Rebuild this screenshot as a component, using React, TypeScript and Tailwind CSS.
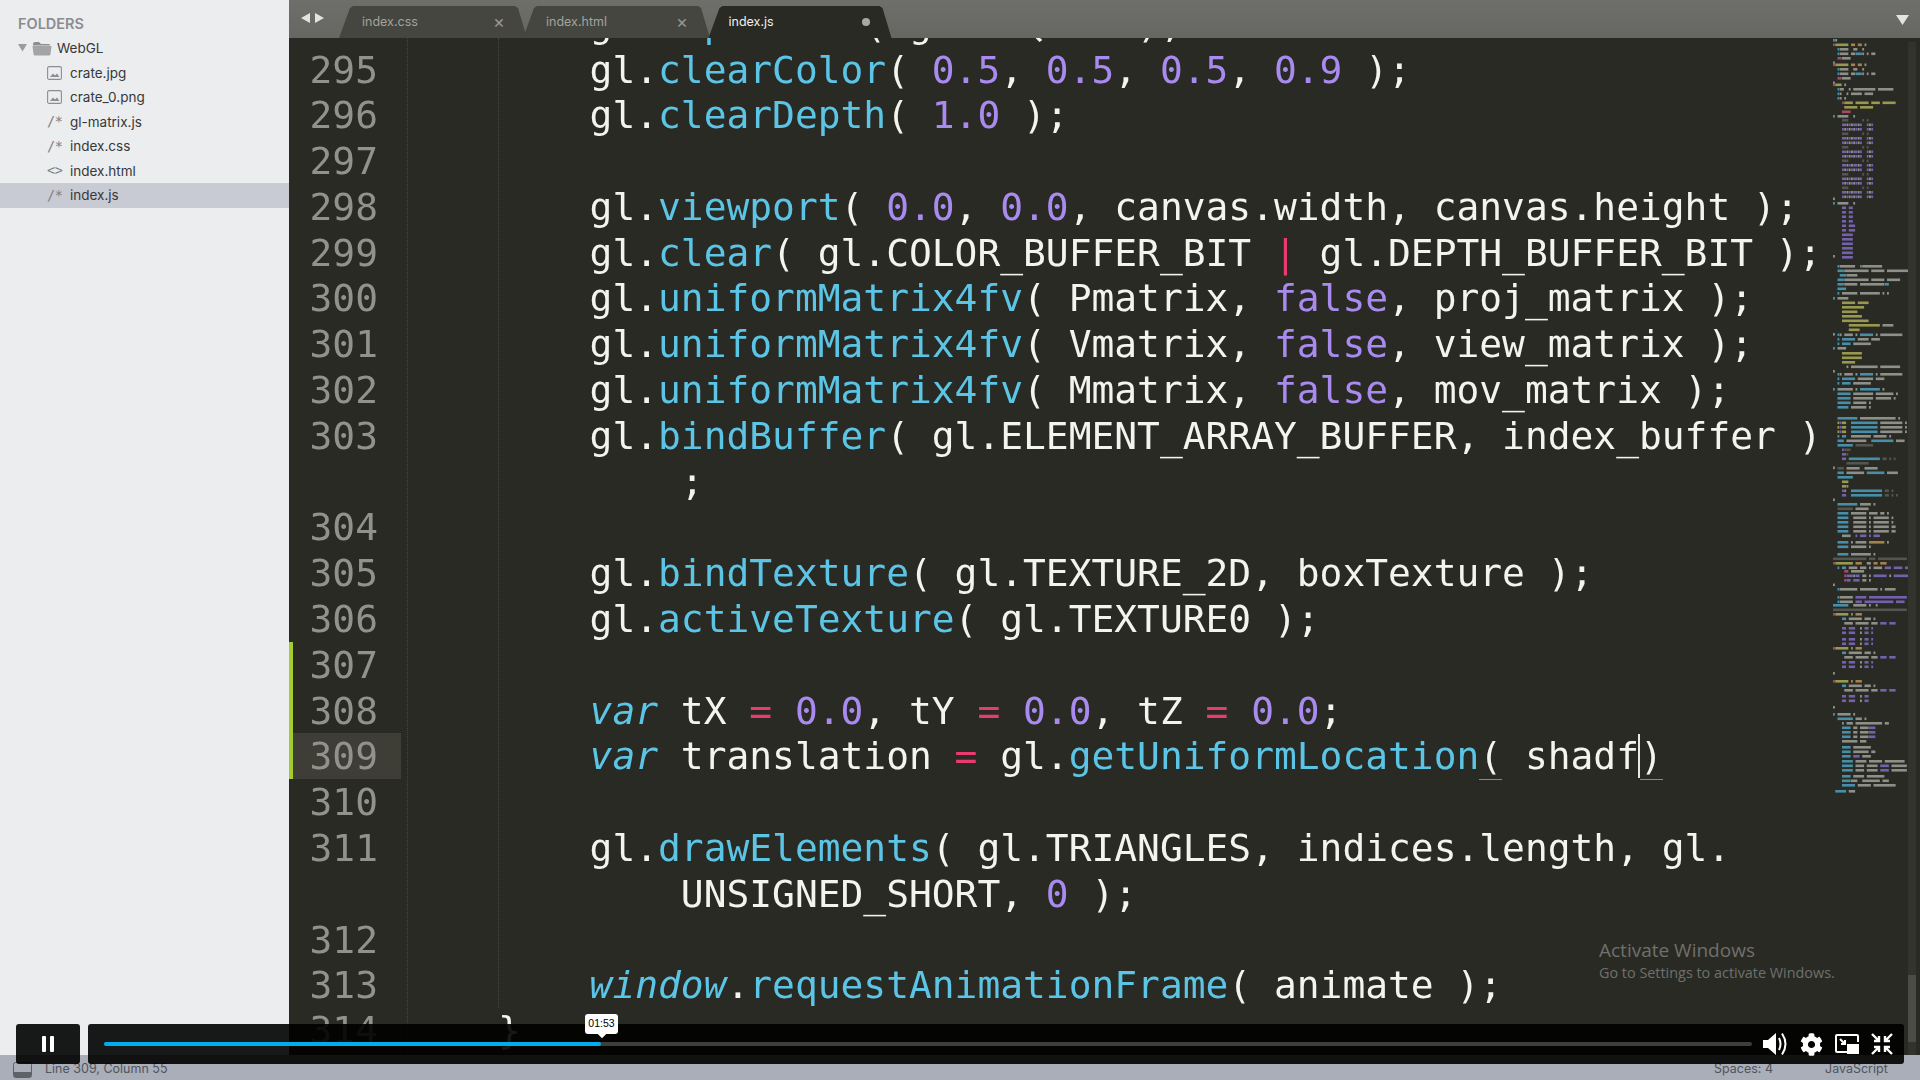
import React from "react";
import { FaCog } from "react-icons/fa";

const W = "text-[#f4f4ef]", C = "text-[#5cc5e6]", P = "text-[#a98bf0]", R = "text-[#ea3b70]";

function Tok({ t, c, i }: { t: string; c?: string; i?: boolean }) {
  return <span className={(c ?? W) + (i ? " italic" : "")}>{t}</span>;
}

const G = ({ t }: { t: string }) => <Tok t={t} />;
const F = ({ t }: { t: string }) => <Tok t={t} c={C} />;
const N = ({ t }: { t: string }) => <Tok t={t} c={P} />;
const O = ({ t }: { t: string }) => <Tok t={t} c={R} />;

function Row({ n, active, changed, children }: { n?: string; active?: boolean; changed?: boolean; children?: React.ReactNode }) {
  return (
    <div className="flex h-[45.8px] leading-[47px] whitespace-pre">
      <div className={"w-[4px] shrink-0 " + (changed ? "bg-[#a3cc2e]" : "")} />
      <div className={"w-[108px] shrink-0 pr-[23px] text-right text-[#92928c] " + (active ? "bg-[#3e3e36]" : "")}>{n}</div>
      <div className="w-[6px] shrink-0" />
      <div className="pl-[182.6px]">{children}</div>
    </div>
  );
}

const tree = [
  { n: "crate.jpg", k: "img" },
  { n: "crate_0.png", k: "img" },
  { n: "gl-matrix.js", k: "js" },
  { n: "index.css", k: "js" },
  { n: "index.html", k: "html" },
  { n: "index.js", k: "js", sel: true },
];

function FileIcon({ k }: { k: string }) {
  if (k === "img")
    return (
      <svg width="15" height="14" viewBox="0 0 15 14" className="text-[#8c8e92]">
        <rect x="0.6" y="0.6" width="13.8" height="12.8" rx="1.5" fill="none" stroke="currentColor" strokeWidth="1.1" />
        <path d="M3 11 L6 7.5 L8 9.5 L10 7.5 L12.5 11 Z" fill="currentColor" />
      </svg>
    );
  return (
    <span className="w-[16px] text-left text-[13.5px] leading-none tracking-[-0.5px] text-[#7d7f83] font-['DejaVu_Sans_Mono',monospace]">
      {k === "html" ? "<>" : "/*"}
    </span>
  );
}

const fnA = ["ryyyyyy oo oo w", "  cwwww  ww  w", "  cwwww wwcccw w ww", "  rrwwww", "w"];
const fnB = ["ryyyyyy o ooo", "    cc wwwwww www w", "     wwww wwwwww www ppp ppp"];
const cl = ["    ggg      g g", "    ppwpwppwp  pwp", "    pwpwpwpwp  pwp"];
const c2 = (s: string) => [s, s];
const sections: [number, string[]][] = [
  [39, ["cw", ...fnA]],
  [63.5, fnA],
  [83.5, ["ryyy w", "  cww  w wwwwwwwwww wwwwwww", "  cw  w wwwww wwww", "  cw w", "    ryyyy yyyyyy yyyy yyyyyy", "     yyyyyy yyyyyy", "    rrrr"]],
  [115, ["c wwwww  w"]],
  [119, [...cl, ...cl, ...cl, ...cl, ...cl, ...cl]],
  [197.5, ["w"]],
  [202, ["c wwwww  w", ...c2("    pp pp"), ...c2("    pp pp"), ...c2("    pp ppp"), ...c2("    ppppp"), ...c2("    ppppp"), ...c2("    ppppp")]],
  [255, ["w"]],
  [265, ["  cwwwwwww  cwwwwwwwww", "  cccwwwwwwwwwww wwwwww wwwwwwwwwww", "   cccwwwww", "  cccwwwwwwwwwww wwwwww wwwwww", "  cccwwwwww wwwwwwwwwwwcc", "  cccc", "  c wwwwwww wwwwwwwww w w"]],
  [297, ["c wwwww", "    yyyyyy yyyyy", "    yyyyyyyyyy", "    yyyyyyy", "    yyyyyyyyy", "    yyyyyyyyyyyy", "       yyyyyyyyyyyyyy wwwww", "       yyyyy", "w"]],
  [333.5, ["  cw wwww w cccccc w wwwwwwwwww", "  c cccccc wwwww wwww", "  c cccc wwwwwwww", "c wwww"]],
  [352, ["    yyyyyyyyy", "    yyyyyyyyy", "    yyyyyy", "      w wwwwwwwwwwww wwwwwwwww", "w"]],
  [373, ["  cw wwww w cccccc w wwwwwwwwww", "  c cccccc wwwwwww wwww", "  c cccc wwwwwwww"]],
  [388, ["c wwwwwww w ccccccccc w", "  cccccc wwwwwwwww wwwwwwww w", "  cccccc wwwwwwwww wwwwwww w", "  cccccc wwwwww w", "  ccccc wwwwwww w"]],
  [417, ["  ccccccccc wwwwwwwwwwwwwwww w", "  ypyy  cccccccccccc wwwwwwwwww w", "  ypyy  cccccccccccc wwwwwwwwww w", "  ypyy  cccccccccccc wwwwwwwwww w"]],
  [435, ["  c cc  wwwwwwwww wwwwww w", "  ccc wwwwwwwww  cccccccccc wwww", "  ccccccc gggggggg", "    pggg", "    ppg", "    pp cccccccccccccc gg g g", "      gggggggggg", "w"]],
  [467, ["  ggg wwwwww  wwwwww", "  ccc wwwwwwww cccccccc wwwww", "  ccccccc", "    yyy", "    yyw", "    pw  cccccccccccccc gg g", "    pp  cccccccccccccc gg g g", "w"]],
  [503, ["  ccccccccc wwwww w", "  ggggggg wwwwww", "  ccccc wwwwwww wwww ww w", "  ccccc  wwwwww w wwwwwww w", "  ccccc  wwwwww w wwwwwww w", "  ccccc  wwwwww w wwwwwww ww", "  ccccc  wwwwww w wwwwwww ww", "    wwww  p ppp p ppp"]],
  [541, ["  ccccc w wwwww ooooooo w", "  ccccc wwwwwww w"]],
  [553, ["  ccccc wwwwwwwww w", "ggggggggggggggg ggg ggggggggggggg", "ryyyyyyyy ooo  ww oo ooo", "  c cc wwww www w wwww ppp pppp ppp"]],
  [570, ["     rr wwwwww", "     rpppwpp ww w pppppp w pppppppp", "     rpp ppp ww w", "w"]],
  [588, ["  cwwwwwwww wwwwwwww w wwwww"]],
  [596, ["  cwwwwww ppppp ppppppppppppppppp", "  cwwwwww ppp ppppppppppppp pppp"]],
  [604, ["ccccccc  wwwwww w  w"]],
  [608.5, ["ggggggggggggggggggggggggggggggggg"]],
  [613, fnB],
  [627, ["    pp ppp  w pp p", "    pp ppp  w pp p"]],
  [638, ["    pp ppp  w pp p", "    pp ppp  w pp p"]],
  [647, fnB],
  [661, ["    pp ppp  w pp p", "    pp ppp  w pp p"]],
  [672, ["w"]],
  [680, fnB],
  [695, ["    pp ppp  w pp", "    pp ppp  w pp"]],
  [706, ["w"]],
  [713, ["c wwwwww w", "  ccccccc www w", "    w www wwwwwwwwwwww ww", "    cccc ww wwwwppp", "    cccc ww wwwwppp", "    cccc ww wwwwppp", "    wwwwwww www"]],
  [746, ["    cccc wwwwwwww", "    cccc wwwwwww ww", "    cccc ppp wwww"]],
  [760, ["    ccccc wwwww wwwwww wwwwwwwww", "    ccccc wwww wwwww pppp wwwwwww", "    ccccc wwww wwwww pppp wwwwwww"]],
  [775, ["    cccc wwwww wwwwwwww", "    ccccwww  wwwwwwww www", "    cccccc wwwwww wwwwwwwwww"]],
  [790, [" ccccc www"]],
];
const colors: Record<string, string> = { w: "#8f8f89", c: "#478fa8", p: "#7361ad", y: "#98984f", o: "#a3824d", r: "#a84966", g: "#55554f" };

function Minimap() {
  const rects: React.ReactNode[] = [];
  sections.forEach(([y0, rows]) => {
    rows.forEach((s, i) => {
      let x = 0;
      while (x < s.length) {
        let e = x;
        while (e < s.length && s[e] === s[x]) e++;
        if (s[x] !== " ")
          rects.push(<rect key={`${y0}-${i}-${x}`} x={x * 2.25} y={y0 - 38 + i * 4.5} width={(e - x) * 2.25 - 0.4} height={2.6} fill={colors[s[x]]} />);
        x = e;
      }
    });
  });
  return (
    <svg width="75" height="762" viewBox="0 0 75 762" className="blur-[0.5px]">
      {rects}
    </svg>
  );
}

const tabShape = "[clip-path:polygon(0_100%,11px_6%,14px_0,calc(100%-12px)_0,calc(100%-9px)_6%,100%_100%)]";

export default function App() {
  return (
    <div className="flex h-[1080px] w-[1920px] flex-col overflow-hidden bg-[#2a2a25] font-['Inter',sans-serif]">
      <div className="relative flex min-h-0 flex-1">
        <aside className="w-[289px] shrink-0 bg-[#ebedef] pt-[15px]">
          <div className="pl-[18px] text-[14.5px] font-semibold leading-[18px] text-[#8b8c8e]">FOLDERS</div>
          <div className="mt-[3px] flex h-[24.5px] items-center pl-[18px] text-[13.5px] text-[#36383b]">
            <svg width="10" height="8" viewBox="0 0 10 8" className="text-[#9a9b9d]"><path d="M0 0 H9 L4.5 7.5 Z" fill="currentColor" /></svg>
            <svg width="20" height="15" viewBox="0 0 20 15" className="ml-[4px]"><path d="M1 3 Q1 1 3 1 H7 L9 3 H17 Q18 3 18 4.5 H1 Z" fill="#8d8e90" /><path d="M0.5 5 H19.5 L18.5 13 Q18.3 14.5 17 14.5 H3 Q1.7 14.5 1.5 13 Z" fill="#a3a4a6" /></svg>
            <span className="ml-[5px]">WebGL</span>
          </div>
          {tree.map((f) => (
            <div key={f.n} className={"flex h-[24.5px] items-center pl-[47px] text-[13.5px] text-[#36383b] " + (f.sel ? "bg-[#c8cbd3]" : "")}>
              <span className="flex w-[23px] items-center"><FileIcon k={f.k} /></span>
              {f.n}
            </div>
          ))}
        </aside>

        <main className="flex min-w-0 flex-1 flex-col">
          <div className="flex h-[38px] shrink-0 items-end bg-gradient-to-b from-[#6e6f6a] to-[#666762] pr-[6px]">
            <div className="flex h-full w-[47px] shrink-0 items-center gap-[5px] pl-[12px] pb-[2px]">
              <svg width="9" height="10" viewBox="0 0 9 10"><path d="M9 0 V10 L0 5 Z" fill="#e3e3e0" /></svg>
              <svg width="9" height="10" viewBox="0 0 9 10"><path d="M0 0 V10 L9 5 Z" fill="#e3e3e0" /></svg>
            </div>
            <div className={"ml-[3px] flex h-[32px] w-[188px] shrink-0 items-center justify-between bg-[#454640] pl-[23px] pr-[22px] text-[12.5px] text-[#a3a39e] " + tabShape}>
              <span>index.css</span><span className="text-[18px] leading-none text-[#96968f]">×</span>
            </div>
            <div className={"ml-[-4px] flex h-[32px] w-[187px] shrink-0 items-center justify-between bg-[#454640] pl-[23px] pr-[22px] text-[12.5px] text-[#a3a39e] " + tabShape}>
              <span>index.html</span><span className="text-[18px] leading-none text-[#96968f]">×</span>
            </div>
            <div className={"ml-[-1.5px] flex h-[32px] w-[183px] shrink-0 items-center justify-between bg-[#2a2a25] pl-[20px] pr-[22px] text-[12.5px] text-[#f0f0ec] " + tabShape}>
              <span>index.js</span><span className="h-[8px] w-[8px] rounded-full bg-[#a8a8a4]" />
            </div>
            <div className="flex-1" />
            <svg width="13" height="10" viewBox="0 0 13 10" className="mb-[13px] mr-[5px]"><path d="M0 0 H13 L6.5 10 Z" fill="#e3e3e0" /></svg>
          </div>

          <div className="relative flex min-h-0 flex-1">
            <div className="relative min-w-0 flex-1 overflow-hidden font-['DejaVu_Sans_Mono',monospace] text-[37.9px]">
              <div className="pointer-events-none absolute inset-y-0 left-[118px] border-l border-dotted border-[#45463f]" />
              <div className="pointer-events-none absolute bottom-[47px] top-0 left-[209px] border-l border-dotted border-[#45463f]" />
              <div className="mt-[-37.3px] blur-[0.2px]">
                <Row n="294"><G t="gl." /><F t="depthFunc" /><G t="( gl.LEQUAL );" /></Row>
                <Row n="295"><G t="gl." /><F t="clearColor" /><G t="( " /><N t="0.5" /><G t=", " /><N t="0.5" /><G t=", " /><N t="0.5" /><G t=", " /><N t="0.9" /><G t=" );" /></Row>
                <Row n="296"><G t="gl." /><F t="clearDepth" /><G t="( " /><N t="1.0" /><G t=" );" /></Row>
                <Row n="297" />
                <Row n="298"><G t="gl." /><F t="viewport" /><G t="( " /><N t="0.0" /><G t=", " /><N t="0.0" /><G t=", canvas.width, canvas.height );" /></Row>
                <Row n="299"><G t="gl." /><F t="clear" /><G t="( gl.COLOR_BUFFER_BIT " /><O t="|" /><G t=" gl.DEPTH_BUFFER_BIT );" /></Row>
                <Row n="300"><G t="gl." /><F t="uniformMatrix4fv" /><G t="( Pmatrix, " /><N t="false" /><G t=", proj_matrix );" /></Row>
                <Row n="301"><G t="gl." /><F t="uniformMatrix4fv" /><G t="( Vmatrix, " /><N t="false" /><G t=", view_matrix );" /></Row>
                <Row n="302"><G t="gl." /><F t="uniformMatrix4fv" /><G t="( Mmatrix, " /><N t="false" /><G t=", mov_matrix );" /></Row>
                <Row n="303"><G t="gl." /><F t="bindBuffer" /><G t="( gl.ELEMENT_ARRAY_BUFFER, index_buffer )" /></Row>
                <Row><G t="    ;" /></Row>
                <Row n="304" />
                <Row n="305"><G t="gl." /><F t="bindTexture" /><G t="( gl.TEXTURE_2D, boxTexture );" /></Row>
                <Row n="306"><G t="gl." /><F t="activeTexture" /><G t="( gl.TEXTURE0 );" /></Row>
                <Row n="307" changed />
                <Row n="308" changed><Tok t="var" c={C} i /><G t=" tX " /><O t="=" /><G t=" " /><N t="0.0" /><G t=", tY " /><O t="=" /><G t=" " /><N t="0.0" /><G t=", tZ " /><O t="=" /><G t=" " /><N t="0.0" /><G t=";" /></Row>
                <Row n="309" changed active>
                  <Tok t="var" c={C} i /><G t=" translation " /><O t="=" /><G t=" gl." /><F t="getUniformLocation" />
                  <span className={W + " border-b border-[#8a8a85] pb-[1px]"}>(</span><G t=" shadf" />
                  <span className={W + " ml-[-1px] border-l-2 border-[#e8e8e4]"}><span className="border-b border-[#8a8a85] pb-[1px]">)</span></span>
                </Row>
                <Row n="310" />
                <Row n="311"><G t="gl." /><F t="drawElements" /><G t="( gl.TRIANGLES, indices.length, gl." /></Row>
                <Row><G t="    UNSIGNED_SHORT, " /><N t="0" /><G t=" );" /></Row>
                <Row n="312" />
                <Row n="313"><Tok t="window" c={C} i /><G t="." /><F t="requestAnimationFrame" /><G t="( animate );" /></Row>
                <div className="flex h-[45.8px] leading-[45.8px] whitespace-pre">
                  <div className="w-[112px] shrink-0 pr-[23px] text-right text-[#92928c]">314</div>
                  <div className="w-[6px] shrink-0" />
                  <div className={"pl-[91px] " + W}>{"}"}</div>
                </div>
              </div>
            </div>

            <div className="flex w-[87px] shrink-0">
              <div className="w-[75px] shrink-0 overflow-hidden">
                <Minimap />
              </div>
              <div className="relative mt-[4px] w-[8px] shrink-0 bg-[#33332e]">
                <div className="absolute bottom-[13px] h-[67px] w-full bg-[#4c4c47]" />
              </div>
            </div>

            <div className="absolute left-[1310px] top-[899px] text-[#70706b] font-['Open_Sans',sans-serif]">
              <div className="text-[19px] leading-[26px]">Activate Windows</div>
              <div className="text-[14.4px] leading-[20px]">Go to Settings to activate Windows.</div>
            </div>
          </div>
        </main>

        <div className="absolute bottom-[-9px] left-[16px] right-[16px] z-10 flex h-[40px] gap-[8px]">
          <div className="flex w-[64px] shrink-0 items-center justify-center rounded-[3px] bg-[#000000e6]">
            <svg width="12" height="16" viewBox="0 0 12 16"><rect width="4" height="16" rx="1" fill="#fff" /><rect x="8" width="4" height="16" rx="1" fill="#fff" /></svg>
          </div>
          <div className="relative flex min-w-0 flex-1 items-center rounded-[3px] bg-[#000000e6] pl-[16px]">
            <div className="relative h-[4px] w-[1648px] shrink-0 rounded-full bg-[#3e3e3e]">
              <div className="h-full w-[497px] rounded-full bg-[#00adef]" />
              <div className="absolute left-[481px] top-[-28px] flex h-[20px] w-[33px] items-center justify-center rounded-[3px] bg-white text-[10.5px] text-black font-['Liberation_Sans',sans-serif]">
                01:53
                <div className="absolute bottom-[-3px] left-[14px] h-[6px] w-[6px] rotate-45 bg-white" />
              </div>
            </div>
            <div className="ml-[11px] flex items-center gap-[12px] text-white">
              <svg width="25" height="24" viewBox="0 0 25 24"><path d="M0 8 H5 L13 1 V23 L5 16 H0 Z" fill="#fff" /><path d="M16 6 Q19 12 16 18" fill="none" stroke="#fff" strokeWidth="2" /><path d="M19 1.5 Q26 12 19 22.5" fill="none" stroke="#fff" strokeWidth="2" /></svg>
              <FaCog size={23} color="#fff" />
              <svg width="24" height="22" viewBox="0 0 24 22"><path d="M12 19 H2 Q1 19 1 18 V3 Q1 2 2 2 H22 Q23 2 23 3 V9" fill="none" stroke="#fff" strokeWidth="2" /><rect x="12" y="11" width="12" height="10" fill="#fff" /><path d="M5 6 L10 11 M10 7 V11 H6" fill="none" stroke="#fff" strokeWidth="2" /></svg>
              <svg width="22" height="22" viewBox="0 0 22 22"><path d="M1 1 L8 8 M8 3 V8 H3 M21 1 L14 8 M14 3 V8 H19 M1 21 L8 14 M8 19 V14 H3 M21 21 L14 14 M14 19 V14 H19" fill="none" stroke="#fff" strokeWidth="2.4" /></svg>
            </div>
          </div>
        </div>
      </div>

      <footer className="flex h-[25px] shrink-0 items-center bg-[#a9aeb9] pl-[13px] pr-[13px] pt-[4px] text-[12.5px] text-[#51545b]">
        <svg width="19" height="16" viewBox="0 0 19 16"><rect x="0.5" y="0.5" width="18" height="15" rx="2" fill="none" stroke="#5e6168" /><rect x="1" y="10" width="17" height="5" fill="#5e6168" /></svg>
        <span className="ml-[13px]">Line 309, Column 55</span>
        <div className="flex-1" />
        <span className="w-[111px]">Spaces: 4</span>
        <span className="w-[82px]">JavaScript</span>
      </footer>
    </div>
  );
}
